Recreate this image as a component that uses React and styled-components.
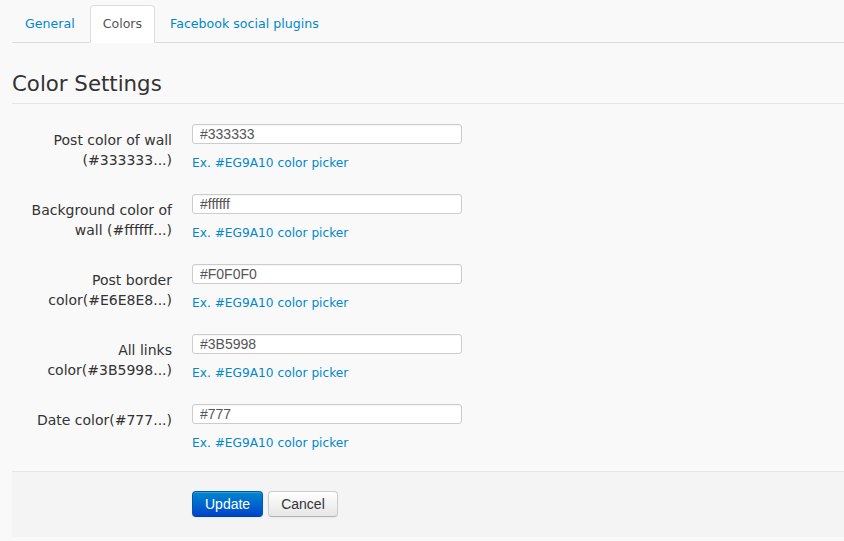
import styled, { createGlobalStyle } from 'styled-components';

const GlobalStyle = createGlobalStyle`
  html, body {
    margin: 0;
    padding: 0;
    background: #f9f9f9;
  }
  body {
    font-family: "DejaVu Sans", Verdana, sans-serif;
    font-size: 13px;
    color: #333333;
  }
`;

const Page = styled.div`
  padding: 5px 0 4px 12px;
`;

const Tabs = styled.ul`
  display: flex;
  margin: 0;
  padding: 0;
  list-style: none;
  border-bottom: 1px solid #dddddd;
`;

const Tab = styled.li`
  margin-right: 2px;
  margin-bottom: -1px;
  padding: 8px 12px;
  line-height: 20px;
  font-size: 12.6px;
  border: 1px solid ${({ $active }) => ($active ? '#dddddd' : 'transparent')};
  border-bottom-color: ${({ $active }) => ($active ? '#ffffff' : 'transparent')};
  border-radius: 4px 4px 0 0;
  background: ${({ $active }) => ($active ? '#ffffff' : 'transparent')};
  color: ${({ $active }) => ($active ? '#555555' : '#0088cc')};
  cursor: pointer;
`;

const Heading = styled.h2`
  margin: 27px 0 0;
  padding-bottom: 5px;
  font-size: 21.3px;
  font-weight: normal;
  line-height: 28px;
  color: #333333;
  border-bottom: 1px solid #e5e5e5;
`;

const Form = styled.form`
  padding-top: 20px;
`;

const Row = styled.div`
  display: flex;
  gap: 20px;
  margin-bottom: ${({ $last }) => ($last ? '0' : '21px')};
`;

const Label = styled.label`
  width: 160px;
  flex-shrink: 0;
  text-align: right;
  padding-top: 6px;
  line-height: 20px;
  font-size: 14px;
  color: #333333;
`;

const Controls = styled.div`
  display: flex;
  flex-direction: column;
`;

const Input = styled.input`
  box-sizing: border-box;
  width: 270px;
  height: 20px;
  margin: 0;
  padding: 0 7px;
  border: 1px solid #cccccc;
  border-radius: 3px;
  background: #ffffff;
  font-family: "Liberation Sans", Arial, sans-serif;
  font-size: 14px;
  color: #555555;
  box-shadow: inset 0 1px 1px rgba(0, 0, 0, 0.04);
`;

const Help = styled.a`
  margin-top: 9px;
  line-height: 20px;
  font-size: 12.2px;
  color: #0088cc;
  text-decoration: none;
`;

const Actions = styled.div`
  display: flex;
  gap: 5px;
  margin-top: 18px;
  padding: 19px 0 20px 180px;
  border-top: 1px solid #e5e5e5;
  background: #f4f4f4;
`;

const Button = styled.button`
  height: 26px;
  padding: 0 12px;
  font-family: "Liberation Sans", Arial, sans-serif;
  font-size: 14px;
  line-height: 18px;
  border-radius: 4px;
  cursor: pointer;
  border: 1px solid ${({ $primary }) => ($primary ? '#0055b8' : '#cccccc')};
  border-bottom-color: ${({ $primary }) => ($primary ? '#00449a' : '#b3b3b3')};
  color: ${({ $primary }) => ($primary ? '#ffffff' : '#333333')};
  background: ${({ $primary }) =>
    $primary
      ? 'linear-gradient(to bottom, #0088cc, #0044cc)'
      : 'linear-gradient(to bottom, #ffffff, #e6e6e6)'};
  box-shadow: inset 0 1px 0 rgba(255, 255, 255, 0.2), 0 1px 2px rgba(0, 0, 0, 0.05);
`;

const fields = [
  { label: 'Post color of wall (#333333...)', value: '#333333' },
  { label: 'Background color of wall (#ffffff...)', value: '#ffffff' },
  { label: 'Post border color(#E6E8E8...)', value: '#F0F0F0' },
  { label: 'All links color(#3B5998...)', value: '#3B5998' },
  { label: 'Date color(#777...)', value: '#777' },
];

export default function App() {
  return (
    <Page>
      <GlobalStyle />
      <Tabs>
        <Tab>General</Tab>
        <Tab $active>Colors</Tab>
        <Tab>Facebook social plugins</Tab>
      </Tabs>
      <Heading>Color Settings</Heading>
      <Form onSubmit={(e) => e.preventDefault()}>
        {fields.map((f, i) => (
          <Row key={f.value} $last={i === fields.length - 1}>
            <Label>{f.label}</Label>
            <Controls>
              <Input defaultValue={f.value} />
              <Help href="#">Ex. #EG9A10 color picker</Help>
            </Controls>
          </Row>
        ))}
        <Actions>
          <Button $primary type="submit">Update</Button>
          <Button type="button">Cancel</Button>
        </Actions>
      </Form>
    </Page>
  );
}
